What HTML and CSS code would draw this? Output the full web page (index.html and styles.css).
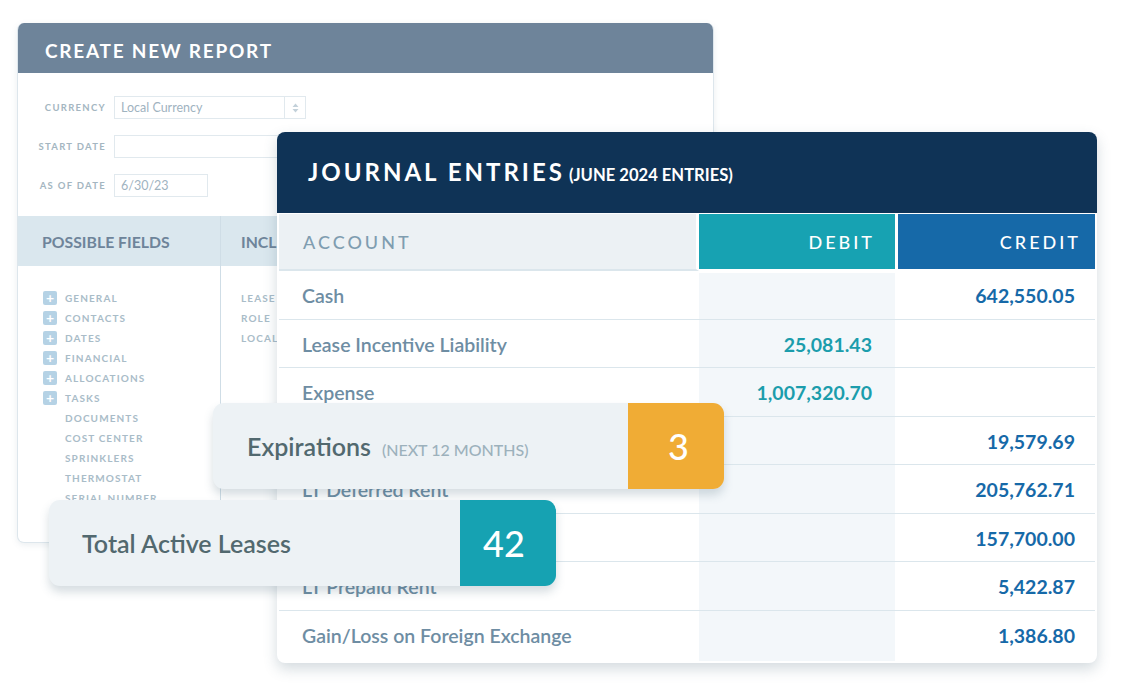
FILE: index.html
```html
<!DOCTYPE html>
<html lang="en">
<head>
  <meta charset="UTF-8">
  <title>Lease Reports</title>
  <meta name="viewport" content="width=device-width, initial-scale=1">
  <link rel="stylesheet" href="styles.css">
</head>
<body>
  <div class="stage">

    <!-- report builder in the back -->
    <div class="report">
      <div class="report-head">CREATE NEW REPORT</div>
      <div class="report-form">
        <div class="form-row">
          <label>Currency</label>
          <div class="select">
            <span>Local Currency</span>
            <span class="arrows">
              <svg width="7" height="10" viewBox="0 0 7 10"><path d="M3.5 0.5 L6.5 4 H0.5 Z M3.5 9.5 L0.5 6 H6.5 Z" fill="#c3d1da"/></svg>
            </span>
          </div>
        </div>
        <div class="form-row">
          <label>Start Date</label>
          <div class="input wide"></div>
        </div>
        <div class="form-row">
          <label>As of Date</label>
          <div class="input short">6/30/23</div>
        </div>
      </div>
      <div class="fields">
        <div class="fields-col first">
          <div class="fields-head">POSSIBLE FIELDS</div>
          <ul class="field-list">
            <li><span class="plus">+</span>General</li>
            <li><span class="plus">+</span>Contacts</li>
            <li><span class="plus">+</span>Dates</li>
            <li><span class="plus">+</span>Financial</li>
            <li><span class="plus">+</span>Allocations</li>
            <li><span class="plus">+</span>Tasks</li>
            <li><span class="noplus"></span>Documents</li>
            <li><span class="noplus"></span>Cost Center</li>
            <li><span class="noplus"></span>Sprinklers</li>
            <li><span class="noplus"></span>Thermostat</li>
            <li><span class="noplus"></span>Serial Number</li>
          </ul>
        </div>
        <div class="fields-col">
          <div class="fields-head">INCL</div>
          <ul class="field-list plain">
            <li>Lease</li>
            <li>Role</li>
            <li>Local</li>
          </ul>
        </div>
      </div>
    </div>

    <!-- journal entries -->
    <div class="journal">
      <div class="journal-head">
        <span class="journal-title">JOURNAL ENTRIES</span>
        <span class="journal-sub">(JUNE 2024 ENTRIES)</span>
      </div>
      <div class="je-table">
        <div class="th th-account">ACCOUNT</div>
        <div class="th th-debit">DEBIT</div>
        <div class="th th-credit">CREDIT</div>

        <div class="debit-bg"></div>

        <div class="td acc">Cash</div><div class="td deb"></div><div class="td cre">642,550.05</div>
        <div class="td acc">Lease Incentive Liability</div><div class="td deb">25,081.43</div><div class="td cre"></div>
        <div class="td acc">Expense</div><div class="td deb">1,007,320.70</div><div class="td cre"></div>
        <div class="td acc"></div><div class="td deb"></div><div class="td cre">19,579.69</div>
        <div class="td acc">LT Deferred Rent</div><div class="td deb"></div><div class="td cre">205,762.71</div>
        <div class="td acc"></div><div class="td deb"></div><div class="td cre">157,700.00</div>
        <div class="td acc">LT Prepaid Rent</div><div class="td deb"></div><div class="td cre">5,422.87</div>
        <div class="td acc last">Gain/Loss on Foreign Exchange</div><div class="td deb last"></div><div class="td cre last">1,386.80</div>
      </div>
    </div>

    <!-- stat cards -->
    <div class="stat stat-exp">
      <div class="stat-label">Expirations <small>(NEXT 12 MONTHS)</small></div>
      <div class="stat-num orange">3</div>
    </div>

    <div class="stat stat-total">
      <div class="stat-label">Total Active Leases</div>
      <div class="stat-num teal">42</div>
    </div>

  </div>
</body>
</html>
```

FILE: styles.css
```css
body {
  margin: 0;
  background: #ffffff;
  font-family: 'Lato', 'Open Sans', sans-serif;
}

.stage {
  position: relative;
  width: 1122px;
  height: 692px;
  overflow: hidden;
}

/* ---------- report builder ---------- */
.report {
  position: absolute;
  left: 17px;
  top: 23px;
  width: 697px;
  height: 520px;
  border: 1px solid #dde6ec;
  border-top: none;
  border-radius: 7px;
  background: #fff;
  box-shadow: 0 2px 6px rgba(90, 120, 140, 0.12);
  overflow: hidden;
  box-sizing: border-box;
}

.report-head {
  height: 50px;
  background: #6e849a;
  color: #fff;
  font-weight: 700;
  font-size: 19px;
  letter-spacing: 1.75px;
  line-height: 55px;
  padding-left: 27px;
}

.report-form {
  padding: 23px 0 0 0;
  display: flex;
  flex-direction: column;
  gap: 16px;
}

.form-row {
  display: flex;
  align-items: center;
  height: 23px;
}

.form-row label {
  width: 88px;
  text-align: right;
  font-size: 9.5px;
  font-weight: 700;
  letter-spacing: 1.3px;
  color: #a4b6c1;
  text-transform: uppercase;
  margin-right: 8px;
}

.select, .input {
  height: 23px;
  box-sizing: border-box;
  border: 1px solid #e1e9ee;
  font-size: 12.5px;
  color: #9fb3bf;
  display: flex;
  align-items: center;
  padding-left: 6px;
}

.select {
  width: 192px;
  justify-content: space-between;
  padding-right: 0;
}

.select .arrows {
  width: 20px;
  height: 100%;
  border-left: 1px solid #e1e9ee;
  display: flex;
  align-items: center;
  justify-content: center;
}

.input.wide { width: 300px; }
.input.short { width: 94px; }

.fields {
  margin-top: 19px;
  display: flex;
  height: 400px;
}

.fields-col {
  flex: 1;
}

.fields-col.first {
  flex: 0 0 202px;
  border-right: 1px solid #cfdde6;
}

.fields-head {
  height: 50px;
  background: #dae7ee;
  color: #6e849a;
  font-size: 15.8px;
  font-weight: 700;
  line-height: 52px;
  padding-left: 24px;
}

.fields-col:not(.first) .fields-head {
  padding-left: 20px;
}

.field-list {
  list-style: none;
  margin: 0;
  padding: 22px 0 0 25px;
}

.field-list.plain {
  padding-left: 20px;
}

.field-list li {
  height: 20px;
  display: flex;
  align-items: center;
  font-size: 10px;
  font-weight: 700;
  letter-spacing: 1.1px;
  color: #a9bcc8;
  text-transform: uppercase;
}

.plus, .noplus {
  width: 14px;
  height: 14px;
  margin-right: 8px;
  flex: none;
}

.plus {
  background: #b5d2e5;
  border-radius: 2px;
  color: #fff;
  font-size: 14px;
  line-height: 14px;
  text-align: center;
  letter-spacing: 0;
}

/* ---------- journal entries ---------- */
.journal {
  position: absolute;
  left: 277px;
  top: 132px;
  width: 820px;
  height: 531px;
  background: #fff;
  border-radius: 8px;
  box-shadow: 0 6px 14px rgba(60, 90, 110, 0.22);
  overflow: hidden;
}

.journal-head {
  height: 81px;
  background: #0f3356;
  color: #fff;
  display: flex;
  align-items: baseline;
  padding-left: 31px;
  padding-top: 25px;
  box-sizing: border-box;
}

.journal-title {
  font-size: 24px;
  font-weight: 700;
  letter-spacing: 3px;
  margin-right: 4px;
}

.journal-sub {
  font-size: 16.6px;
  font-weight: 700;
}

.je-table {
  position: relative;
  display: grid;
  grid-template-columns: 420px 199px 197px;
  grid-template-rows: 57px repeat(8, 48.5px);
  padding: 1px 2px 0 2px;
}

.th {
  display: flex;
  align-items: center;
  font-size: 18px;
  letter-spacing: 3px;
  color: #fff;
  font-weight: 500;
  border-bottom: 2px solid #fff;
  box-sizing: border-box;
}

.th-account {
  background: #ecf1f4;
  color: #7f9db0;
  padding-left: 24px;
  border-bottom-color: #dbe6ec;
  border-right: 3px solid #fff;
}

.th-debit {
  background: #17a2b2;
  justify-content: flex-end;
  padding-right: 20px;
  border-right: 3px solid #fff;
}

.th-credit {
  background: #1669a8;
  justify-content: flex-end;
  padding-right: 14px;
}

.debit-bg {
  position: absolute;
  left: 422px;
  top: 60px;
  width: 196px;
  height: 388px;
  background: #f3f7fa;
}

.td {
  position: relative;
  display: flex;
  align-items: center;
  font-size: 19.5px;
  padding-top: 2px;
  box-sizing: border-box;
  border-bottom: 1px solid #dbe6ec;
}

.td.last {
  border-bottom: none;
}

.acc {
  color: #6e8da3;
  font-weight: 600;
  padding-left: 23px;
}

.deb {
  justify-content: flex-end;
  padding-right: 26px;
  color: #1b9dac;
  font-weight: 700;
}

.cre {
  justify-content: flex-end;
  padding-right: 20px;
  color: #1669a8;
  font-weight: 700;
}

/* ---------- stat cards ---------- */
.stat {
  position: absolute;
  height: 86px;
  display: flex;
  background: #edf2f5;
  border-radius: 11px;
  overflow: hidden;
  box-shadow: 0 6px 10px rgba(70, 100, 120, 0.22);
}

.stat-exp {
  left: 213px;
  top: 403px;
  width: 511px;
}

.stat-total {
  left: 49px;
  top: 500px;
  width: 507px;
}

.stat-label {
  flex: 1;
  display: flex;
  align-items: center;
  padding-left: 34px;
  font-size: 25px;
  font-weight: 600;
  color: #52696f;
}

.stat-total .stat-label {
  padding-left: 33px;
}

.stat-label small {
  font-size: 16px;
  font-weight: 500;
  color: #9cb1bc;
  margin-left: 11px;
  margin-top: 6px;
}

.stat-num {
  width: 96px;
  display: flex;
  align-items: center;
  justify-content: center;
  color: #fff;
  font-size: 36px;
  font-weight: 500;
  box-sizing: border-box;
}

.stat-exp .stat-num {
  padding-left: 5px;
}

.stat-total .stat-num {
  padding-right: 8px;
}

.orange { background: #f0ac35; }
.teal { background: #16a2b2; }
```
